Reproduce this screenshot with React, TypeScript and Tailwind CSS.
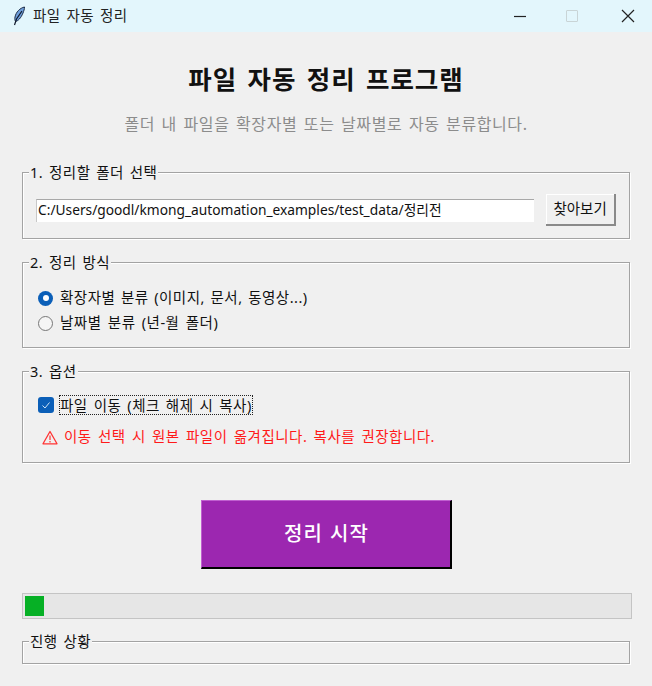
const font = "font-['Noto_Sans','Noto_Sans_CJK_KR',sans-serif]";

function Group({ title, className, children }: { title: string; className: string; children?: React.ReactNode }) {
  return (
    <div className={`relative border border-[#a3a3a3] shadow-[1px_1px_0_#fff,inset_1px_1px_0_#fff] ${className}`}>
      <span className="absolute left-[6px] top-[-10px] bg-[#f0f0f0] px-px text-[14.5px] leading-[18px] tracking-[0.5px] whitespace-nowrap text-[#111] [word-spacing:1.5px]">{title}</span>
      {children}
    </div>
  );
}

function Feather() {
  return (
    <svg width="14" height="20" viewBox="0 0 14 20">
      <path d="M12.5 1C8 2 4 6 3 11c-.4 2 0 3.5.5 4.5C6 15 9 12 11 7c.8-2 1.5-4 1.5-6z" fill="#6f9fdc" stroke="#1b2a44" strokeWidth="1" />
      <path d="M10 5 4.5 13 2.5 19" fill="none" stroke="#10182a" strokeWidth="1.2" />
    </svg>
  );
}

export default function App() {
  return (
    <div className={`h-[686px] w-[652px] overflow-hidden bg-[#f0f0f0] ${font}`}>
      <div className="flex h-8 items-center bg-[#e3f6fc] pl-[12px]">
        <Feather />
        <span className="ml-[7px] text-[14.5px] tracking-[0.5px] text-[#222] [word-spacing:1.5px]">파일 자동 정리</span>
        <div className="ml-auto flex items-center">
          <svg width="14" height="14" viewBox="0 0 14 14" className="mr-[39px]">
            <path d="M1 7.5h12" stroke="#222" strokeWidth="1.2" />
          </svg>
          <div className="mr-[42px] h-[12px] w-[12px] rounded-[1px] border border-[#c9d4d6]" />
          <svg width="16" height="16" viewBox="0 0 16 16" className="mr-[16px]">
            <path d="M2 2l12 12M14 2 2 14" stroke="#222" strokeWidth="1.2" />
          </svg>
        </div>
      </div>

      <h1 className="mt-[31px] text-center text-[25.5px] leading-[32px] font-bold tracking-[1px] text-[#111] [word-spacing:2.7px]">파일 자동 정리 프로그램</h1>
      <p className="mt-[19px] text-center text-[16px] leading-[20px] tracking-[0.6px] text-[#8c8c8c] [word-spacing:1.8px]">폴더 내 파일을 확장자별 또는 날짜별로 자동 분류합니다.</p>

      <div className="mx-[22px] mt-[38px] flex flex-col">
        <Group title="1. 정리할 폴더 선택" className="flex h-[67px] items-center pt-[9px] pr-[13px] pl-[13px]">
          <div className="flex h-[23px] w-[499px] items-center border-t border-l border-t-[#a8a8a8] border-l-[#c8c8c8] bg-white pl-px text-[13.75px] whitespace-nowrap text-[#111]">
            C:/Users/goodl/kmong_automation_examples/test_data/정리전
          </div>
          <div className="ml-[12px] flex h-[32px] w-[70px] items-center justify-center border-r-2 border-b-2 border-r-[#8a8a8a] border-b-[#8a8a8a] bg-[#f0f0f0] text-[14.5px] text-[#111] shadow-[inset_1px_1px_0_#fff]">
            찾아보기
          </div>
        </Group>

        <Group title="2. 정리 방식" className="mt-[23px] flex h-[86px] flex-col gap-[7px] pt-[26px] pl-[15px]">
          <div className="flex h-[18px] items-center">
            <span className="flex h-[15px] w-[15px] items-center justify-center rounded-full bg-[#0b5fb8]">
              <span className="h-[6px] w-[6px] rounded-full bg-white" />
            </span>
            <span className="ml-[7px] text-[14.5px] tracking-[0.5px] whitespace-nowrap text-[#111] [word-spacing:1.3px]">확장자별 분류 (이미지, 문서, 동영상...)</span>
          </div>
          <div className="flex h-[18px] items-center">
            <span className="h-[15px] w-[15px] rounded-full border-[1.5px] border-[#777] bg-[#f5f5f5]" />
            <span className="ml-[7px] text-[14.5px] tracking-[0.5px] whitespace-nowrap text-[#111] [word-spacing:2px]">날짜별 분류 (년-월 폴더)</span>
          </div>
        </Group>

        <Group title="3. 옵션" className="mt-[23px] h-[92px] pt-[23px] pl-[15px]">
          <div className="flex h-[20px] items-center">
            <span className="flex h-[16px] w-[16px] items-center justify-center rounded-[3px] bg-[#0b5fb8]">
              <svg width="10" height="10" viewBox="0 0 10 10">
                <path d="M1.5 5.5 4 8l4.5-5.5" fill="none" stroke="#cfe3f7" strokeWidth="1" />
              </svg>
            </span>
            <span className="ml-[5px] border border-dotted border-[#222] text-[14.5px] leading-[18px] tracking-[0.5px] whitespace-nowrap text-[#111] [word-spacing:1.7px]">파일 이동 (체크 해제 시 복사)</span>
          </div>
          <div className="mt-[12px] ml-[4px] flex h-[20px] items-center">
            <svg width="16" height="15" viewBox="0 0 16 15">
              <path d="M8 1.5 15 13.8H1z" fill="none" stroke="#f33" strokeWidth="1.3" strokeLinejoin="round" />
              <path d="M8 5.5v4.5M8 11v1.5" stroke="#f33" strokeWidth="1.2" />
            </svg>
            <span className="ml-[6px] text-[14.5px] tracking-[0.5px] whitespace-nowrap text-[#ff1a1a] [word-spacing:2px]">이동 선택 시 원본 파일이 옮겨집니다. 복사를 권장합니다.</span>
          </div>
        </Group>

        <div className="mt-[37px] flex h-[69px] w-[251px] items-center justify-center self-center border-t border-l border-t-[#c060d0] border-l-[#c060d0] border-r-2 border-b-2 border-r-black border-b-black bg-[#9c27b0] pl-[2px] text-[20px] font-medium tracking-[1px] text-white [word-spacing:1px]">
          정리 시작
        </div>

        <div className="mt-[24px] flex h-[26px] w-[610px] items-center border border-[#c4c4c4] bg-[#e6e6e6] pl-[2px]">
          <div className="h-[20px] w-[19px] bg-[#06b025]" />
        </div>

        <Group title="진행 상황" className="mt-[22px] h-[23px] w-[608px]" />
      </div>
    </div>
  );
}
